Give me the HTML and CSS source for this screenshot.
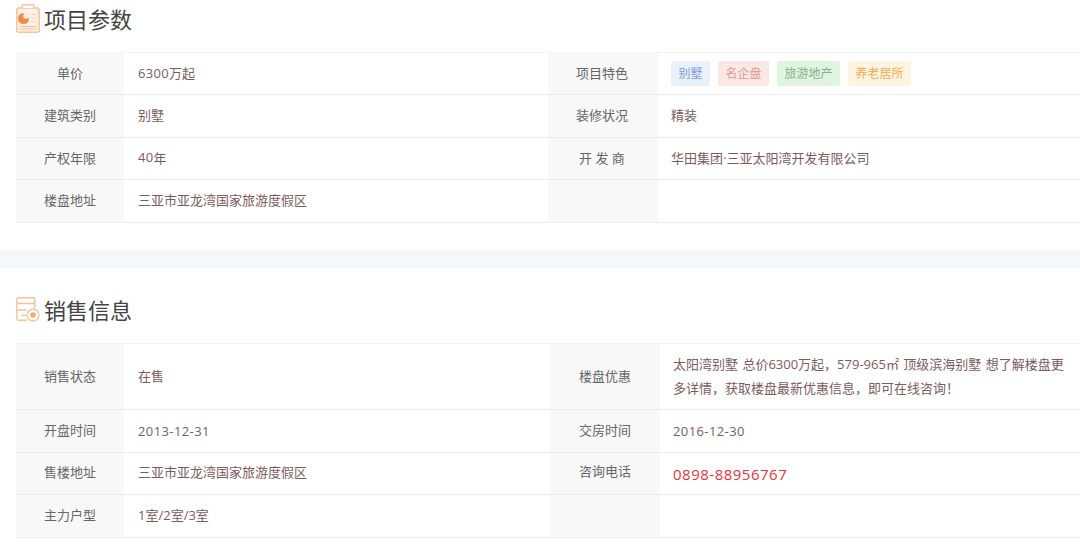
FILE: index.html
```html
<!DOCTYPE html>
<html lang="zh-CN">
<head>
<meta charset="utf-8">
<title>项目参数</title>
<link rel="stylesheet" href="styles.css">
</head>
<body>
<section class="section first">
  <h2 class="title">
    <svg class="icon" width="24" height="29" viewBox="0 0 24 29" fill="none">
      <rect x="0.800" y="4" width="22.400" height="24.200" rx="2" fill="#fdf0e4" stroke="#f5c49c" stroke-width="1.500"/>
      <path d="M6 4V2.200C6 1.300 6.600.8 7.500.8h9c.9 0 1.500.5 1.500 1.400V4" fill="#fff" stroke="#f5c49c" stroke-width="1.500"/>
      <circle cx="7.500" cy="14.500" r="5.500" fill="#f08a45"/>
      <path d="M7.500 14.500V9a5.500 5.500 0 0 1 5.500 5.500z" fill="#fdf0e4"/>
      <path d="M15 10.500h5.500M15 14h5.500M15 17.500h5.500" stroke="#f8d3b5" stroke-width="1.200"/>
      <path d="M3.500 22.500h17M3.500 25h17" stroke="#f5bd94" stroke-width="1.200"/>
    </svg>
    项目参数
  </h2>
  <div class="table">
    <div class="row"><div class="label">单价</div><div class="value"><span class="num">6300</span>万起</div><div class="label">项目特色</div><div class="value tags"><span class="tag blue">别墅</span><span class="tag red">名企盘</span><span class="tag green">旅游地产</span><span class="tag orange">养老居所</span></div></div>
    <div class="row"><div class="label">建筑类别</div><div class="value">别墅</div><div class="label">装修状况</div><div class="value">精装</div></div>
    <div class="row"><div class="label">产权年限</div><div class="value"><span class="num">40</span>年</div><div class="label">开 发 商</div><div class="value">华田集团·三亚太阳湾开发有限公司</div></div>
    <div class="row"><div class="label">楼盘地址</div><div class="value">三亚市亚龙湾国家旅游度假区</div><div class="label"></div><div class="value"></div></div>
  </div>
</section>
<div class="band"></div>
<section class="section second">
  <h2 class="title">
    <svg class="icon" width="24" height="25" viewBox="0 0 24 25" fill="none">
      <path d="M11 23.300H2.300C1.400 23.300.8 22.700.8 21.800V2.300C.8 1.400 1.400.8 2.300.8h15c.9 0 1.500.6 1.500 1.500V11" stroke="#f5c49c" stroke-width="1.400"/>
      <path d="M.8 6.500h18M.8 13h10M5 18.500h5" stroke="#f5c49c" stroke-width="1.400"/>
      <circle cx="17" cy="18" r="6" fill="#fff" stroke="#f5c49c" stroke-width="1.400"/>
      <circle cx="17" cy="18" r="2.800" fill="#f5ab78"/>
    </svg>
    销售信息
  </h2>
  <div class="table wide">
    <div class="row tall"><div class="label">销售状态</div><div class="value">在售</div><div class="label">楼盘优惠</div><div class="value promo">太阳湾别墅 总价6300万起，579-965㎡ 顶级滨海别墅 想了解楼盘更多详情，获取楼盘最新优惠信息，即可在线咨询！</div></div>
    <div class="row"><div class="label">开盘时间</div><div class="value num date">2013-12-31</div><div class="label">交房时间</div><div class="value num date">2016-12-30</div></div>
    <div class="row raised"><div class="label">售楼地址</div><div class="value">三亚市亚龙湾国家旅游度假区</div><div class="label">咨询电话</div><div class="value phone">0898-88956767</div></div>
    <div class="row"><div class="label">主力户型</div><div class="value">1室/2室/3室</div><div class="label"></div><div class="value"></div></div>
  </div>
</section>
</body>
</html>
```
FILE: styles.css
```css
* {
  box-sizing: border-box;
}

html,
body {
  margin: 0;
  height: 550px;
  overflow: hidden;
  background: #fff;
}

body {
  font-family: "Open Sans", "Noto Sans CJK SC", sans-serif;
  font-size: 13px;
  color: #7a5c5c;
}

.section {
  padding-left: 16px;
}

.first {
  height: 222px;
}

.second {
  padding-top: 24px;
}

.title {
  display: flex;
  align-items: center;
  gap: 4px;
  margin: 0;
  height: 51px;
  padding-bottom: 16px;
  font-size: 22px;
  font-weight: 400;
  line-height: 1;
  color: #444;
}

.first .title {
  height: 52px;
  padding-bottom: 15px;
}

.icon {
  flex: none;
}

.table {
  border-top: 1px solid #f3f3f3;
}

.row {
  display: grid;
  grid-template-columns: 108px 424px 110px 1fr;
  height: 42.500px;
  border-bottom: 1px solid #ececec;
}

.row:first-child {
  height: 42px;
}

.wide .row {
  grid-template-columns: 108px 426px 110px 1fr;
}

.row.tall {
  height: 66px;
}

.label,
.value {
  display: flex;
  align-items: center;
  padding-bottom: 2px;
}

.tall .label,
.tall .value {
  padding-bottom: 3px;
}

.label {
  justify-content: center;
  background: #f8f8f8;
  color: #666;
}

.label:nth-child(3) {
  padding-right: 2px;
}

.wide .label:nth-child(3) {
  padding-right: 0;
}

.raised .label,
.raised .value {
  padding-bottom: 4px;
}

.raised .label:nth-child(3) {
  padding-bottom: 5px;
}

.value {
  padding-left: 14px;
}

.value:nth-child(4) {
  padding-left: 13px;
}

.num {
  letter-spacing: 0.300px;
}

.value.date {
  padding-bottom: 0;
  letter-spacing: 0.400px;
}

.tags {
  gap: 8px;
  padding-bottom: 0;
}

.tag {
  height: 25px;
  padding: 0 7.500px;
  border-radius: 2px;
  font-size: 12px;
  line-height: 25px;
}

.blue {
  background: #e8f1fc;
  color: #7a9ed4;
}

.red {
  background: #fae8e6;
  color: #e29a94;
}

.green {
  background: #e0f5e0;
  color: #84b08a;
}

.orange {
  background: #fff3e2;
  color: #f0ad4e;
}

.tall .promo {
  display: block;
  padding-top: 8px;
  padding-right: 14px;
  padding-bottom: 0;
  line-height: 24px;
  word-spacing: 1px;
}

.raised .phone {
  padding-top: 1px;
  padding-bottom: 0;
  font-size: 15px;
  font-weight: 500;
  letter-spacing: 0.500px;
  color: #e8333c;
}

.band {
  height: 18px;
  margin-top: 28px;
  background: #f4f8fb;
}
```
